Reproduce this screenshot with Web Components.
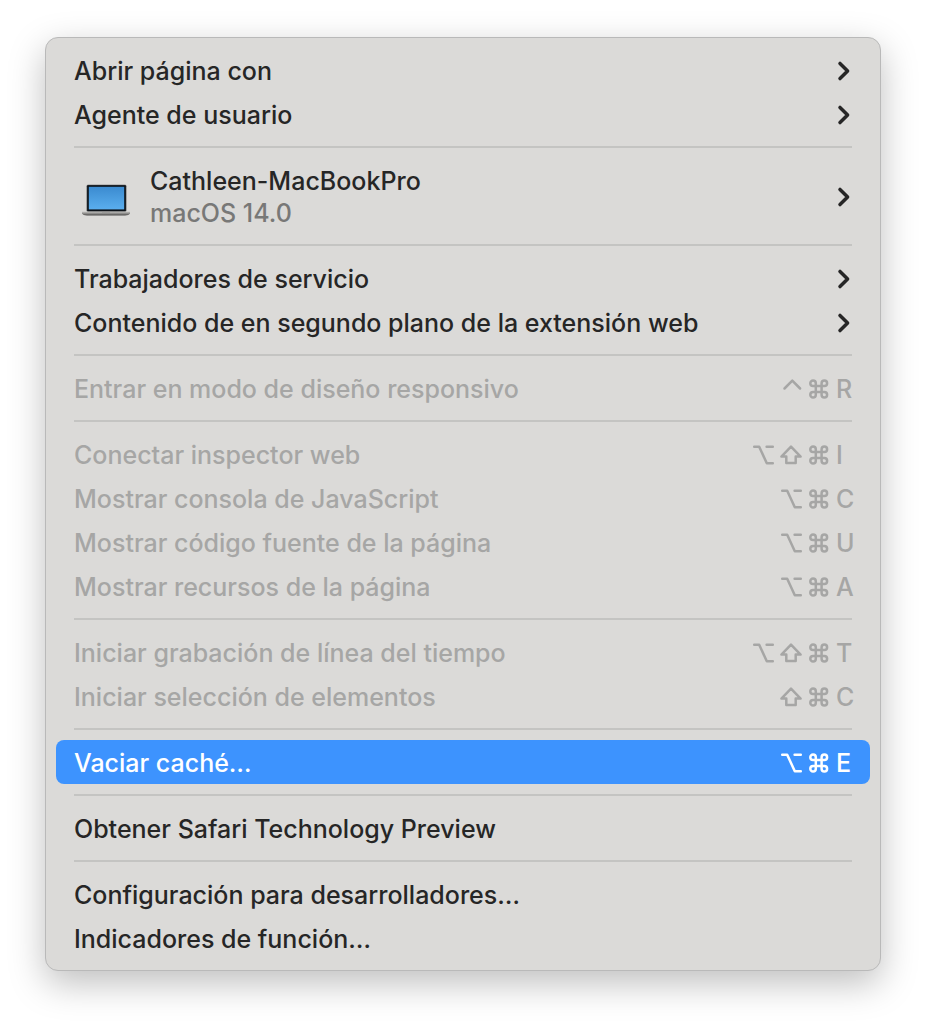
<!DOCTYPE html>
<html lang="es">
<head>
<meta charset="UTF-8">
<meta name="viewport" content="width=device-width, initial-scale=1.0">
<title>Desarrollo</title>
<style>
    body {
        margin: 0;
        padding: 37px 45px 53px;
        background: #ffffff;
        font-family: Inter, "Liberation Sans", sans-serif;
        font-size: 25px;
        font-weight: 500;
        color: #262626;
    }
</style>
</head>
<body>
<context-menu>
    <menu-item submenu>Abrir página con</menu-item>
    <menu-item submenu>Agente de usuario</menu-item>
    <menu-separator></menu-separator>
    <device-item>
        <span slot="name">Cathleen-MacBookPro</span>
        <span slot="system">macOS 14.0</span>
    </device-item>
    <menu-separator></menu-separator>
    <menu-item submenu>Trabajadores de servicio</menu-item>
    <menu-item submenu>Contenido de en segundo plano de la extensión web</menu-item>
    <menu-separator></menu-separator>
    <menu-item disabled keys="control command R">Entrar en modo de diseño responsivo</menu-item>
    <menu-separator></menu-separator>
    <menu-item disabled keys="option shift command I">Conectar inspector web</menu-item>
    <menu-item disabled keys="option command C">Mostrar consola de JavaScript</menu-item>
    <menu-item disabled keys="option command U">Mostrar código fuente de la página</menu-item>
    <menu-item disabled keys="option command A">Mostrar recursos de la página</menu-item>
    <menu-separator></menu-separator>
    <menu-item disabled keys="option shift command T">Iniciar grabación de línea del tiempo</menu-item>
    <menu-item disabled keys="shift command C">Iniciar selección de elementos</menu-item>
    <menu-separator></menu-separator>
    <menu-item active keys="option command E">Vaciar caché…</menu-item>
    <menu-separator></menu-separator>
    <menu-item>Obtener Safari Technology Preview</menu-item>
    <menu-separator></menu-separator>
    <menu-item>Configuración para desarrolladores…</menu-item>
    <menu-item>Indicadores de función…</menu-item>
</context-menu>

<script>
const KEY_PATHS = {
    control: 'M4.5 14.5 L12.3 6.6 L20.1 14.5',
    option: 'M2.2 6.8 H7.2 L14.8 23.2 H20.8 M14.6 6.8 H20.8',
    shift: 'M11 6.6 L20.6 16.6 H15.7 V23 H6.3 V16.6 H1.4 Z',
    command: 'M7.8 9.35 V20.65 A2.75 2.75 0 1 1 5.05 17.9 H16.35 A2.75 2.75 0 1 1 13.6 20.65 V9.35 A2.75 2.75 0 1 1 16.35 12.1 H5.05 A2.75 2.75 0 1 1 7.8 9.35 Z'
};

const CHEVRON = `
    <svg class="chevron" viewBox="0 0 16 24" aria-hidden="true">
        <path d="M4 5.4 L11.6 13 L4 20.6" />
    </svg>`;

// Shared by every row of the menu
const ROW_STYLES = `
    :host {
        display: block;
    }

    button {
        display: flex;
        align-items: center;
        width: 100%;
        margin: 0;
        padding: 0 18px;
        border: none;
        border-radius: 8px;
        background: none;
        color: inherit;
        font: inherit;
        text-align: left;
    }

    svg {
        display: block;
        flex: none;
        fill: none;
        stroke: currentColor;
        stroke-linecap: round;
        stroke-linejoin: round;
    }

    .chevron {
        width: 16px;
        height: 24px;
        stroke-width: 3.5;
    }
`;

class ContextMenu extends HTMLElement {
    constructor() {
        super();
        this.attachShadow({ mode: 'open' });
        this.shadowRoot.innerHTML = `
            <style>
                :host {
                    display: block;
                    padding: 10px;
                    border: 1px solid #b9b9b9;
                    border-radius: 13px;
                    background: #dbdad8;
                    box-shadow: 0 12px 36px rgba(0, 0, 0, 0.26);
                }
            </style>
            <slot></slot>
        `;
    }

    connectedCallback() {
        this.setAttribute('role', 'menu');
    }
}

class MenuItem extends HTMLElement {
    constructor() {
        super();
        this.attachShadow({ mode: 'open' });
    }

    connectedCallback() {
        this.render();
    }

    renderKeys() {
        const keys = (this.getAttribute('keys') || '').split(' ').filter(Boolean);
        if (!keys.length) {
            return '';
        }
        const letter = keys.pop();
        const icons = keys.map((key) => `
            <svg class="key" viewBox="0 0 28 28" role="img" aria-label="${key}">
                <path d="${KEY_PATHS[key]}" />
            </svg>`).join('');
        return `<span class="keys">${icons}<span class="letter">${letter}</span></span>`;
    }

    render() {
        this.shadowRoot.innerHTML = `
            <style>
                ${ROW_STYLES}

                button {
                    min-height: 44px;
                    line-height: 32px;
                }

                button:disabled {
                    color: #a6a6a5;
                }

                :host([active]) button {
                    background: #3d93fe;
                    color: #ffffff;
                }

                .label,
                .letter {
                    padding-top: 2px;
                }

                .label {
                    flex: 1;
                }

                .keys {
                    display: flex;
                    align-items: center;
                }

                .key {
                    width: 28px;
                    height: 28px;
                    stroke-width: 2.5;
                }

                .letter {
                    width: 16px;
                    white-space: nowrap;
                }
            </style>
            <button type="button" role="menuitem" ${this.hasAttribute('disabled') ? 'disabled' : ''}>
                <span class="label"><slot></slot></span>
                ${this.renderKeys()}
                ${this.hasAttribute('submenu') ? CHEVRON : ''}
            </button>
        `;
    }
}

class DeviceItem extends HTMLElement {
    constructor() {
        super();
        this.attachShadow({ mode: 'open' });
        this.shadowRoot.innerHTML = `
            <style>
                ${ROW_STYLES}

                button {
                    min-height: 76px;
                    gap: 12px;
                    line-height: 32px;
                }

                .laptop {
                    width: 64px;
                    height: 64px;
                    stroke: none;
                }

                .text {
                    display: flex;
                    flex: 1;
                    flex-direction: column;
                    padding-top: 2px;
                }

                .system {
                    color: #787877;
                }
            </style>
            <button type="button" role="menuitem">
                <svg class="laptop" viewBox="0 0 64 64" aria-hidden="true">
                    <defs>
                        <linearGradient id="screen" x1="0" y1="0" x2="0" y2="1">
                            <stop offset="0" stop-color="#3b8bd0" />
                            <stop offset="1" stop-color="#5aaeee" />
                        </linearGradient>
                        <linearGradient id="base" x1="0" y1="0" x2="0" y2="1">
                            <stop offset="0" stop-color="#c9c8c6" />
                            <stop offset="0.45" stop-color="#989795" />
                            <stop offset="1" stop-color="#4c4b4a" />
                        </linearGradient>
                    </defs>
                    <rect x="12.6" y="20.8" width="39.8" height="27" rx="1.4" fill="#555555" />
                    <rect x="13.2" y="21.2" width="38.6" height="26.4" rx="1" fill="#0c1218" />
                    <rect x="14.8" y="22.8" width="35.4" height="22.6" fill="url(#screen)" />
                    <path d="M8 47.4 H56 V49.2 Q55 51.4 51 51.4 H13 Q9 51.4 8 49.2 Z" fill="url(#base)" />
                    <rect x="28" y="47.4" width="8" height="1" fill="#8a8988" />
                </svg>
                <span class="text">
                    <span><slot name="name"></slot></span>
                    <span class="system"><slot name="system"></slot></span>
                </span>
                ${CHEVRON}
            </button>
        `;
    }
}

class MenuSeparator extends HTMLElement {
    constructor() {
        super();
        this.attachShadow({ mode: 'open' });
        this.shadowRoot.innerHTML = `
            <style>
                :host {
                    display: block;
                    padding: 10px 18px;
                }

                hr {
                    height: 2px;
                    margin: 0;
                    border: none;
                    background: #c4c4c2;
                }
            </style>
            <hr>
        `;
    }
}

customElements.define('context-menu', ContextMenu);
customElements.define('menu-item', MenuItem);
customElements.define('device-item', DeviceItem);
customElements.define('menu-separator', MenuSeparator);
</script>
</body>
</html>
